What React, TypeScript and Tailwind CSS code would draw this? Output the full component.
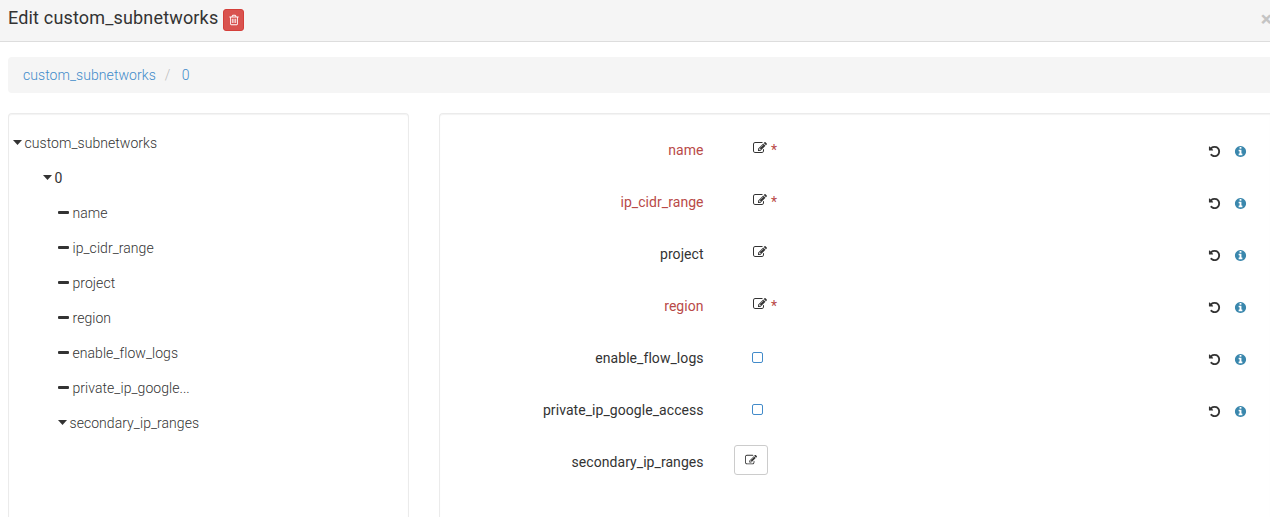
type IconProps = { path: string; className: string };

const EDIT =
  "M888 1184l116-116-152-152-116 116v56h96v96h56zm440-720q-16-16-33 1l-350 350q-17 17-1 33t33-1l350-350q17-17 1-33zm80 594v190q0 119-84.5 203.5t-203.5 84.5h-832q-119 0-203.5-84.5t-84.5-203.5v-832q0-119 84.5-203.5t203.5-84.5h832q63 0 117 25 15 7 18 23 3 17-9 29l-49 49q-14 14-32 8-23-6-45-6h-832q-66 0-113 47t-47 113v832q0 66 47 113t113 47h832q66 0 113-47t47-113v-126q0-13 9-22l64-64q15-15 35-7t20 29zm-96-738l288 288-672 672h-288v-288zm444 132l-92 92-288-288 92-92q28-28 68-28t68 28l152 152q28 28 28 68t-28 68z";
const UNDO =
  "M1664 896q0 156-61 298t-164 245-245 164-298 61q-172 0-327-72.5t-264-204.5q-7-10-6.5-22.5t8.5-20.5l137-138q10-9 25-9 16 2 23 12 73 95 179 147t225 52q104 0 198.5-40.5t163.5-109.5 109.5-163.5 40.5-198.5-40.5-198.5-109.5-163.5-163.5-109.5-198.5-40.5q-98 0-188 35.5t-160 101.5l137 138q31 30 14 69-17 40-59 40h-448q-26 0-45-19t-19-45v-448q0-42 40-59 39-17 69 14l130 129q107-101 244.5-156.5t284.5-55.5q156 0 298 61t245 164 164 245 61 298z";
const INFO =
  "M1152 1376v-160q0-14-9-23t-23-9h-96v-512q0-14-9-23t-23-9h-320q-14 0-23 9t-9 23v160q0 14 9 23t23 9h96v320h-96q-14 0-23 9t-9 23v160q0 14 9 23t23 9h448q14 0 23-9t9-23zm-128-896v-160q0-14-9-23t-23-9h-192q-14 0-23 9t-9 23v160q0 14 9 23t23 9h192q14 0 23-9t9-23zm640 416q0 209-103 385.5t-279.5 279.5-385.5 103-385.5-103-279.5-279.5-103-385.5 103-385.5 279.5-279.5 385.5-103 385.5 103 279.5 279.5 103 385.5z";
const TRASH =
  "M704 736v576q0 14-9 23t-23 9h-64q-14 0-23-9t-9-23v-576q0-14 9-23t23-9h64q14 0 23 9t9 23zm256 0v576q0 14-9 23t-23 9h-64q-14 0-23-9t-9-23v-576q0-14 9-23t23-9h64q14 0 23 9t9 23zm256 0v576q0 14-9 23t-23 9h-64q-14 0-23-9t-9-23v-576q0-14 9-23t23-9h64q14 0 23 9t9 23zm128 724v-948h-896v948q0 22 7 40.5t14.5 27 10.5 8.5h832q3 0 10.5-8.5t14.5-27 7-40.5zm-672-1076h448l-48-117q-7-9-17-11h-317q-10 2-17 11zm928 32v64q0 14-9 23t-23 9h-96v948q0 83-47 143.5t-113 60.5h-832q-66 0-113-58.5t-47-141.5v-952h-96q-14 0-23-9t-9-23v-64q0-14 9-23t23-9h309l70-167q15-37 54-63t79-26h320q40 0 79 26t54 63l70 167h309q14 0 23 9t9 23z";

function Icon({ path, className }: IconProps) {
  return (
    <svg viewBox="0 0 1792 1792" fill="currentColor" className={className} aria-hidden="true">
      <path d={path} />
    </svg>
  );
}

function Caret() {
  return (
    <svg viewBox="0 0 9 5" className="mr-[2.5px] h-[5px] w-[9px] shrink-0" fill="#333">
      <path d="M0 0h9L4.5 5z" />
    </svg>
  );
}

function Dash() {
  return <span className="mr-[3.5px] h-[3px] w-[11px] shrink-0 rounded-[1px] bg-[#333]" />;
}

const leaves = ["name", "ip_cidr_range", "project", "region", "enable_flow_logs", "private_ip_google..."];

type Field = { label: string; kind: "text" | "check" | "nested"; required?: boolean };

const fields: Field[] = [
  { label: "name", kind: "text", required: true },
  { label: "ip_cidr_range", kind: "text", required: true },
  { label: "project", kind: "text" },
  { label: "region", kind: "text", required: true },
  { label: "enable_flow_logs", kind: "check" },
  { label: "private_ip_google_access", kind: "check" },
  { label: "secondary_ip_ranges", kind: "nested" },
];

function FieldRow({ field }: { field: Field }) {
  return (
    <div className="flex h-[52px] items-center">
      <label
        className={
          field.required
            ? "w-[263.6px] text-right tracking-[0.06px] text-[#b94a48]"
            : "w-[263.6px] text-right tracking-[0.06px] text-[#333]"
        }
      >
        {field.label}
      </label>
      {field.kind === "text" && (
        <button className="mb-[5px] ml-[49.4px] flex h-5 items-center text-[#333]">
          <Icon path={EDIT} className="size-[14px]" />
          {field.required && <span className="ml-1 pt-[5px] text-[#b94a48]">*</span>}
        </button>
      )}
      {field.kind === "check" && (
        <span className="mb-px ml-[48.4px] size-[11px] rounded-[2px] border border-[#428bca]" />
      )}
      {field.kind === "nested" && (
        <button className="mb-1 ml-[30.4px] flex h-[30px] w-[34px] items-center justify-center rounded-[3px] border border-[#ccc] text-[#333]">
          <Icon path={EDIT} className="size-3" />
        </button>
      )}
      {field.kind !== "nested" && (
        <div className="mt-[3px] mr-[23px] ml-auto flex items-center gap-[13px]">
          <Icon path={UNDO} className="size-[13px] text-[#333]" />
          <Icon path={INFO} className="size-[13px] text-[#3a87ad]" />
        </div>
      )}
    </div>
  );
}

export default function App() {
  return (
    <div className="flex h-[517px] w-[1270px] flex-col overflow-hidden bg-white font-[Roboto,sans-serif] text-sm leading-5 text-[#333]">
      <header className="flex h-[42px] shrink-0 items-start border-b border-[#ddd] bg-[#f5f5f5] pl-2">
        <h4 className="mt-2 w-[210px] text-lg leading-5 tracking-[0.17px] whitespace-nowrap">Edit custom_subnetworks</h4>
        <button className="mt-[9px] ml-[5px] flex h-[22px] w-[21px] items-center justify-center rounded-[3px] border border-[#d43f3a] bg-[#d9534f] text-white">
          <Icon path={TRASH} className="size-3" />
        </button>
        <button className="mt-[9px] -mr-[2px] ml-auto text-[21px] leading-5 font-bold text-[#c4c4c4]">×</button>
      </header>

      <nav className="mt-[15px] ml-2 flex h-9 shrink-0 items-center rounded-l bg-[#f5f5f5] pl-[15px] font-light text-[#428bca]">
        <a className="tracking-[0.06px]">custom_subnetworks</a>
        <span className="w-[26px] pl-[9px] text-[#bbb]">/</span>
        <a>0</a>
      </nav>

      <main className="mt-5 flex grow items-stretch">
        <aside className="ml-2 w-[401px] rounded-t border border-b-0 border-[#ebebeb] pt-[11px] font-light tracking-[0.05px] shadow-[inset_0_1px_1px_rgba(0,0,0,0.05)]">
          <div className="flex h-[35px] items-center pl-1">
            <Caret />
            custom_subnetworks
          </div>
          <div className="flex h-[35px] items-center pl-[34px] font-normal">
            <Caret />0
          </div>
          {leaves.map((leaf) => (
            <div key={leaf} className="flex h-[35px] items-center pl-[49px]">
              <Dash />
              {leaf}
            </div>
          ))}
          <div className="flex h-[35px] items-center pl-[49px]">
            <Caret />
            secondary_ip_ranges
          </div>
        </aside>

        <section className="ml-[30px] grow rounded-tl border border-r-0 border-b-0 border-[#ebebeb] pt-[10px] shadow-[inset_0_1px_1px_rgba(0,0,0,0.05)]">
          {fields.map((field) => (
            <FieldRow key={field.label} field={field} />
          ))}
        </section>
      </main>
    </div>
  );
}
